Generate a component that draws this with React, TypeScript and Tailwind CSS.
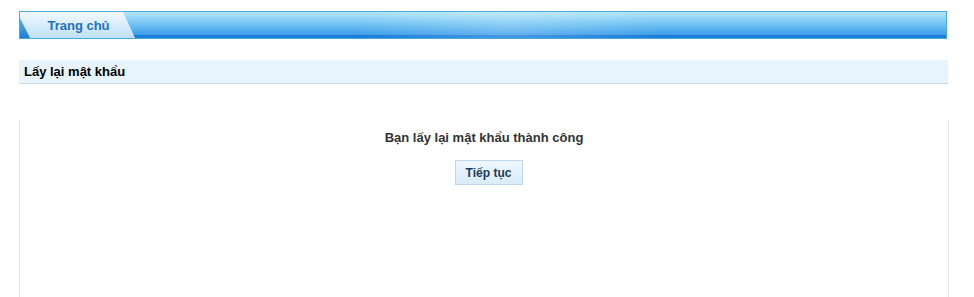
import React from 'react';

const App: React.FC = () => {
  return (
    <div className="w-[974px] h-[297px] bg-white overflow-hidden pt-[11px] px-[19px] font-['Liberation_Sans',Arial,sans-serif]">
      {/* top nav bar */}
      <div className="relative w-[928px] h-[28px] border border-[#4aa8e4] bg-gradient-to-b from-[#b4e6fb] via-[#6cc0f2] to-[#2f92e4] overflow-hidden">
        <div className="absolute left-0 right-0 bottom-0 h-[3px] bg-[#1a7fd9]" />
        <div className="absolute left-[340px] top-0 w-[300px] h-full bg-gradient-to-r from-transparent via-white/20 to-transparent" />
        <div className="relative h-full w-[115px] [clip-path:polygon(0_0,103px_0,115px_100%,0_100%)] bg-gradient-to-b from-[#f1f9fe] to-[#bfe1f7] flex items-center justify-center pl-[2px]">
          <span className="text-[13px] font-bold text-[#1c72c4] leading-none">Trang chủ</span>
          <div className="absolute left-0 bottom-0 w-[10px] h-[20px] bg-gradient-to-b from-[#5cb2ec] to-[#1b7dd6] [clip-path:polygon(0_0,100%_100%,0_100%)]" />
        </div>
      </div>

      {/* section title */}
      <div className="mt-[21px] w-[929px] h-[24px] bg-[#e8f4fd] border-b border-[#c9ddef] flex items-center pl-[5px]">
        <span className="text-[13px] font-bold text-black">Lấy lại mật khẩu</span>
      </div>

      {/* content box */}
      <div className="mt-[36px] w-[930px] h-[200px] border-x border-[#dfe8ef] flex flex-col items-center pt-[10px]">
        <p className="text-[13px] font-bold text-[#333333] leading-[16px]">Bạn lấy lại mật khẩu thành công</p>
        <button className="mt-[14px] ml-[9px] w-[68px] h-[25px] border border-[#bcd8ee] bg-gradient-to-b from-[#eef7fe] to-[#d9ecfa] text-[12px] font-bold text-[#1f3b59]">
          Tiếp tục
        </button>
      </div>
    </div>
  );
};

export default App;
